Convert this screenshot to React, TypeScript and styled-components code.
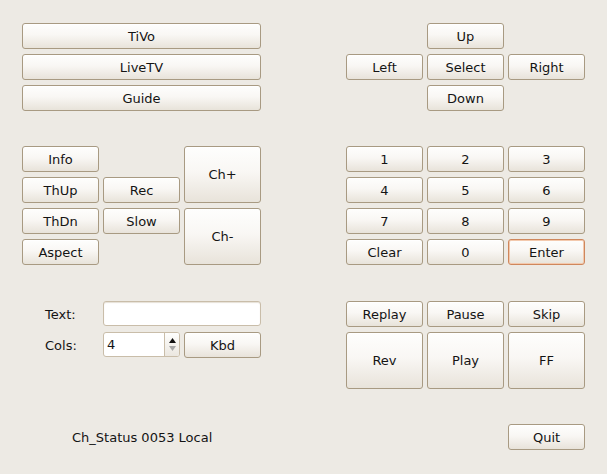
import React from "react";
import styled, { createGlobalStyle, css } from "styled-components";

const Global = createGlobalStyle`
  html, body { margin: 0; padding: 0; background: #edeae4; }
  body { font-family: "DejaVu Sans", "Liberation Sans", sans-serif; font-size: 13px; color: #141414; }
  * { box-sizing: border-box; }
`;

const Page = styled.div`
  width: 607px;
  height: 474px;
  padding: 23px 0 0 22px;
  display: grid;
  grid-template-columns: 239px 239px;
  column-gap: 85px;
  grid-template-rows: 87px 119px 87px 26px;
  row-gap: 36px;
  align-content: start;
`;

const Section = styled.div<{ $rowGap?: number }>`
  display: grid;
  grid-template-columns: repeat(3, 77px);
  grid-auto-rows: 26px;
  column-gap: 4px;
  row-gap: ${(p) => p.$rowGap ?? 5}px;
  align-content: start;
`;

const Btn = styled.button<{ $col?: string; $row?: string; $focus?: boolean }>`
  font: inherit;
  color: #141414;
  margin: 0;
  padding: 0;
  border: 1px solid #a89a82;
  border-radius: 3px;
  background: linear-gradient(#fefefd 0%, #f9f7f4 45%, #e8e3da 100%);
  box-shadow: inset 0 1px 0 #ffffff;
  display: flex;
  align-items: center;
  justify-content: center;
  ${(p) => p.$col && css`grid-column: ${p.$col};`}
  ${(p) => p.$row && css`grid-row: ${p.$row};`}
  ${(p) =>
    p.$focus &&
    css`
      border-color: #cf875c;
      box-shadow: inset 0 0 0 1px #f3c9ad;
    `}
`;

const Label = styled.span<{ $row: string }>`
  grid-column: 1;
  grid-row: ${(p) => p.$row};
  padding-left: 23px;
  display: flex;
  align-items: center;
`;

const TextField = styled.div`
  grid-column: 2 / 4;
  grid-row: 1;
  height: 25px;
  background: #ffffff;
  border: 1px solid #c9bda9;
  border-radius: 3px;
  box-shadow: inset 0 1px 1px #e6e0d6;
`;

const Spin = styled.div`
  grid-column: 2;
  grid-row: 2;
  height: 25px;
  display: flex;
  background: #ffffff;
  border: 1px solid #c9bda9;
  border-radius: 3px;
  overflow: hidden;
`;

const SpinValue = styled.span`
  flex: 1;
  display: flex;
  align-items: center;
  padding-left: 3px;
`;

const SpinArrows = styled.div`
  width: 15px;
  border-left: 1px solid #c9bda9;
  background: linear-gradient(#fefefd, #ebe7e0);
  display: flex;
  flex-direction: column;
  align-items: center;
  justify-content: center;
  gap: 3px;
`;

const StatusCell = styled.div`
  display: flex;
  align-items: center;
  padding-left: 50px;
`;

export default function App() {
  return (
    <>
      <Global />
      <Page>
        <Section>
          <Btn $col="1 / 4">TiVo</Btn>
          <Btn $col="1 / 4">LiveTV</Btn>
          <Btn $col="1 / 4">Guide</Btn>
        </Section>
        <Section>
          <Btn $col="2" $row="1">Up</Btn>
          <Btn $col="1" $row="2">Left</Btn>
          <Btn $col="2" $row="2">Select</Btn>
          <Btn $col="3" $row="2">Right</Btn>
          <Btn $col="2" $row="3">Down</Btn>
        </Section>

        <Section>
          <Btn $col="1" $row="1">Info</Btn>
          <Btn $col="1" $row="2">ThUp</Btn>
          <Btn $col="2" $row="2">Rec</Btn>
          <Btn $col="1" $row="3">ThDn</Btn>
          <Btn $col="2" $row="3">Slow</Btn>
          <Btn $col="1" $row="4">Aspect</Btn>
          <Btn $col="3" $row="1 / 3">Ch+</Btn>
          <Btn $col="3" $row="3 / 5">Ch-</Btn>
        </Section>
        <Section>
          {["1", "2", "3", "4", "5", "6", "7", "8", "9", "Clear", "0"].map((k) => (
            <Btn key={k}>{k}</Btn>
          ))}
          <Btn $focus>Enter</Btn>
        </Section>

        <Section>
          <Label $row="1">Text:</Label>
          <TextField />
          <Label $row="2">Cols:</Label>
          <Spin>
            <SpinValue>4</SpinValue>
            <SpinArrows>
              <svg width="7" height="5" viewBox="0 0 7 5">
                <path d="M3.5 0 L7 5 L0 5 Z" fill="#111" />
              </svg>
              <svg width="7" height="5" viewBox="0 0 7 5">
                <path d="M0 0 L7 0 L3.5 5 Z" fill="#a8a8a8" />
              </svg>
            </SpinArrows>
          </Spin>
          <Btn $col="3" $row="2">Kbd</Btn>
        </Section>
        <Section>
          <Btn>Replay</Btn>
          <Btn>Pause</Btn>
          <Btn>Skip</Btn>
          <Btn $row="2 / 4">Rev</Btn>
          <Btn $row="2 / 4">Play</Btn>
          <Btn $row="2 / 4">FF</Btn>
        </Section>

        <StatusCell>Ch_Status 0053 Local</StatusCell>
        <Section>
          <Btn $col="3">Quit</Btn>
        </Section>
      </Page>
    </>
  );
}
